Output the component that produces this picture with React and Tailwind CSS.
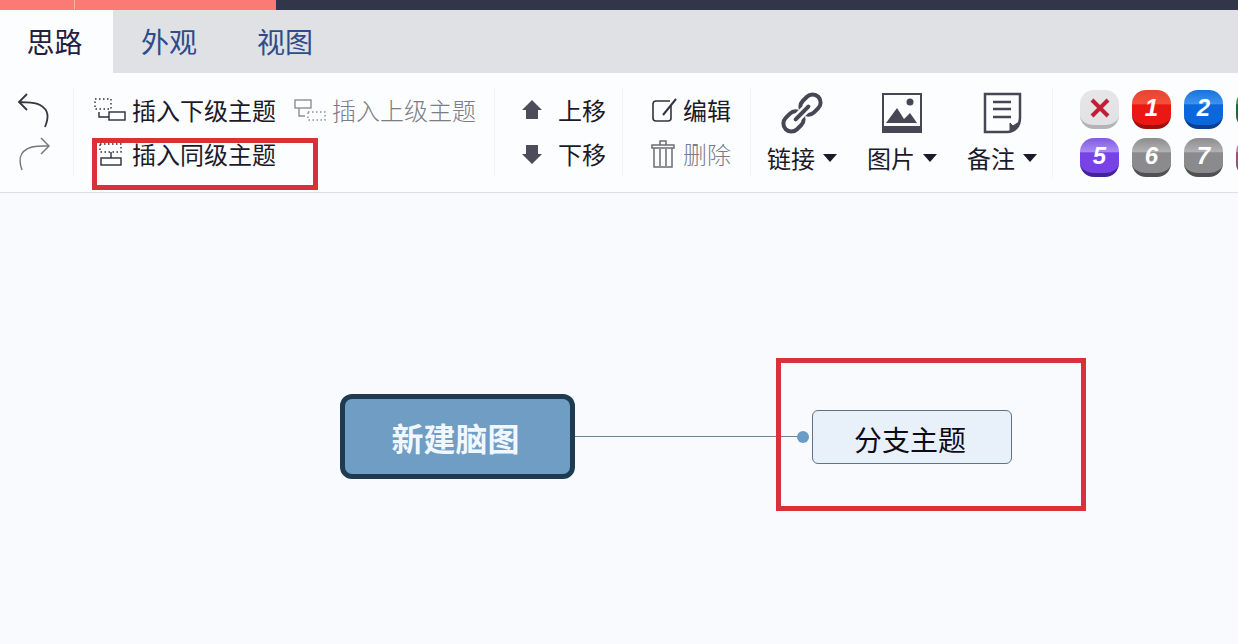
import React, { useState } from "react";

const tabs = ["思路", "外观", "视图"];

const badges = [
  [
    { name: "1", label: "1", style: "from-[#e8432f] via-[#f4503c] to-[#ea1812] border-[#9c100d]" },
    { name: "2", label: "2", style: "from-[#1673dc] via-[#3d93ee] to-[#0a68dc] border-[#0a3f92]" },
    { name: "3", style: "from-[#2f7d3a] via-[#4f9a52] to-[#1f6b2b] border-[#123d18]" },
  ],
  [
    { name: "5", label: "5", style: "from-[#8159e4] via-[#a98cf2] to-[#7743e6] border-[#43239a]" },
    { name: "6", label: "6", style: "from-[#8d8d8f] via-[#b2b2b4] to-[#8b8b8d] border-[#505052]" },
    { name: "7", label: "7", style: "from-[#8d8d8f] via-[#b2b2b4] to-[#8b8b8d] border-[#505052]" },
    { name: "8", style: "from-[#a5648c] via-[#c98ab0] to-[#94527c] border-[#552a45]" },
  ],
];

function UndoIcon() {
  return (
    <svg width="32" height="36" viewBox="0 0 32 36" fill="none" stroke="#35333f" strokeWidth="1.8">
      <path d="M9 2 1 10l8 8" />
      <path d="M1 10c8 1 14-1 21 3 9 5 9 12 5 22" />
    </svg>
  );
}

function RedoIcon() {
  return (
    <svg width="32" height="36" viewBox="0 0 32 36" fill="none" stroke="#77767f" strokeWidth="1.5">
      <path d="M23 2l8 8-8 8" />
      <path d="M31 10c-8 0-16-1-22 3-7 4-9 10-5 21" />
    </svg>
  );
}

function ChildIcon() {
  return (
    <svg width="32" height="24" viewBox="0 0 32 24" fill="none" stroke="#2c2b3a" strokeWidth="1.4">
      <path d="M1 1h16v10H1z" strokeDasharray="1.5 2.5" />
      <path d="M5 14v5h10" />
      <rect x="15" y="14" width="16" height="8" />
    </svg>
  );
}

function ParentIcon() {
  return (
    <svg width="32" height="24" viewBox="0 0 32 24" fill="none" stroke="#8d8c96" strokeWidth="1.4">
      <rect x="1" y="2" width="16" height="8" />
      <path d="M5 10v8h6" />
      <path d="M14 14h17v8H14z" strokeDasharray="1.5 2.5" />
    </svg>
  );
}

function SiblingIcon() {
  return (
    <svg width="32" height="24" viewBox="0 0 32 24" fill="none" stroke="#2c2b3a" strokeWidth="1.4">
      <path d="M6 2h21v8H6z" strokeDasharray="1.5 2.5" />
      <path d="M17 10v6" />
      <rect x="7" y="16" width="20" height="7" />
    </svg>
  );
}

function ArrowIcon({ down }) {
  return (
    <svg width="20" height="20" viewBox="0 0 20 20" fill="#4d4c5b" className={down ? "rotate-180" : ""}>
      <path d="M10 0 20 10h-4v9H4v-9H0z" />
    </svg>
  );
}

function EditIcon() {
  return (
    <svg width="26" height="26" viewBox="0 0 26 26" fill="none" stroke="#35333f" strokeWidth="1.6">
      <path d="M19 4H5Q2 4 2 7v14q0 3 3 3h12q3 0 3-3V9" />
      <path d="M25 2 12 18" strokeWidth="2" />
    </svg>
  );
}

function TrashIcon() {
  return (
    <svg width="26" height="28" viewBox="0 0 26 28" fill="none" stroke="#6c6b76" strokeWidth="1.5">
      <path d="M1 5h22v3H1zM9 5V1h6v4M3 8v19h18V8M9 9v17M15 9v17" />
    </svg>
  );
}

function LinkIcon() {
  return (
    <svg width="42" height="42" viewBox="0 0 42 42" fill="none" stroke="#474654">
      <g transform="rotate(-45 21 21)" strokeWidth="4">
        <rect x="-2" y="13" width="22" height="16" rx="8" />
        <rect x="22" y="13" width="22" height="16" rx="8" />
        <path d="M12 21h18" stroke="#fcfdff" strokeWidth="9" strokeLinecap="round" />
        <path d="M12 21h18" strokeWidth="4" strokeLinecap="round" />
      </g>
    </svg>
  );
}

function PictureIcon() {
  return (
    <svg width="40" height="40" viewBox="0 0 40 40">
      <rect x="1" y="1" width="38" height="38" fill="none" stroke="#474654" strokeWidth="2" />
      <path d="M1 33h38v6H1z" fill="#474654" />
      <path d="M4 30 15 15l7 11 6-6 7 10z" fill="#474654" />
      <circle cx="28" cy="9" r="3.5" fill="#474654" />
    </svg>
  );
}

function NoteIcon() {
  return (
    <svg width="40" height="42" viewBox="0 0 40 42" fill="none" stroke="#474654" strokeWidth="2.5">
      <path d="M3 2h35v24c0 8-5 14-13 14H3z" />
      <path d="M11 10h18M11 17h18M11 25h18" strokeWidth="2.5" />
      <path d="M28 39v-8l3 3 6-4c-1 4-4 7-9 9z" fill="#474654" strokeWidth="1" />
    </svg>
  );
}

function ToolButton({ icon, label, disabled, className = "gap-1.5", children }) {
  return (
    <button
      type="button"
      disabled={disabled}
      className={`relative flex h-11 items-center whitespace-nowrap text-2xl ${className} ${
        disabled ? "font-light text-[#7d7c86]" : "text-[#1c1a29]"
      }`}
    >
      {icon}
      <span>{label}</span>
      {children}
    </button>
  );
}

function MenuButton({ icon, label }) {
  return (
    <button type="button" className="flex flex-col items-center gap-1 text-2xl text-[#1c1a29]">
      <span className="flex h-[42px] items-center">{icon}</span>
      <span className="flex items-center gap-2 whitespace-nowrap leading-10">
        {label}
        <svg width="14" height="8" viewBox="0 0 14 8" fill="#1c1a29">
          <path d="M0 0h14L7 8z" />
        </svg>
      </span>
    </button>
  );
}

function Badge({ name, label, style }) {
  return (
    <button
      type="button"
      aria-label={name}
      className={`flex size-[39px] shrink-0 items-center justify-center rounded-[14px] border-b-4 bg-linear-to-b via-40% to-42% font-['Liberation_Sans',sans-serif] text-2xl font-bold italic text-white ${style}`}
    >
      {label}
    </button>
  );
}

function Toolbar() {
  return (
    <div className="flex h-[120px] items-start overflow-hidden border-b border-[#dcdfe6] bg-[#fcfdff] pt-[15px]">
      <div className="flex w-[74px] shrink-0 flex-col border-r border-[#f3f4f9] pl-[18px]">
        <button type="button" aria-label="撤销" className="flex h-11 items-center">
          <UndoIcon />
        </button>
        <button type="button" aria-label="重做" className="flex h-11 items-center">
          <RedoIcon />
        </button>
      </div>

      <div className="flex w-[421px] shrink-0 gap-[18px] border-r border-[#f3f4f9] pl-5">
        <div className="flex flex-col items-start">
          <ToolButton icon={<ChildIcon />} label="插入下级主题" />
          <ToolButton icon={<SiblingIcon />} label="插入同级主题">
            <span className="pointer-events-none absolute -left-0.5 top-1.5 h-[52px] w-[226px] border-5 border-[#d9303a]" />
          </ToolButton>
        </div>
        <ToolButton icon={<ParentIcon />} label="插入上级主题" disabled />
      </div>

      <div className="w-32 shrink-0 border-r border-[#f3f4f9] pl-[27px]">
        <ToolButton icon={<ArrowIcon />} label="上移" className="gap-4" />
        <ToolButton icon={<ArrowIcon down />} label="下移" className="gap-4" />
      </div>

      <div className="w-32 shrink-0 border-r border-[#f3f4f9] pl-7">
        <ToolButton icon={<EditIcon />} label="编辑" />
        <ToolButton icon={<TrashIcon />} label="删除" disabled />
      </div>

      <div className="flex w-[302px] shrink-0 gap-[30px] border-r border-[#f3f4f9] pl-4 pt-1">
        <MenuButton icon={<LinkIcon />} label="链接" />
        <MenuButton icon={<PictureIcon />} label="图片" />
        <MenuButton icon={<NoteIcon />} label="备注" />
      </div>

      <div className="flex shrink-0 flex-col gap-[9px] pl-[27px] pt-0.5">
        <div className="flex gap-[13px]">
          <button
            type="button"
            aria-label="清除"
            className="flex size-[39px] shrink-0 items-center justify-center rounded-[14px] border-b-4 border-[#b4b3b7] bg-linear-to-b from-[#e6e6e9] to-[#e2e2e5]"
          >
            <svg width="20" height="20" viewBox="0 0 20 20" stroke="#c01f35" strokeWidth="4">
              <path d="M2 2l16 16M18 2 2 18" />
            </svg>
          </button>
          {badges[0].map((badge) => (
            <Badge key={badge.name} {...badge} />
          ))}
        </div>
        <div className="flex gap-[13px]">
          {badges[1].map((badge) => (
            <Badge key={badge.name} {...badge} />
          ))}
        </div>
      </div>
    </div>
  );
}

function Canvas() {
  return (
    <main className="relative flex-1 overflow-hidden bg-[#f9fafe]">
      <div className="absolute left-[575px] top-[243px] h-px w-[228px] bg-[#6b8397]" />
      <div className="absolute left-[340px] top-[201px] flex h-[85px] w-[235px] items-center justify-center rounded-xl border-5 border-[#1f3b52] bg-[#6f9dc3] pr-1 text-[32px] font-bold text-[#f1f7ff]">
        新建脑图
      </div>
      <div className="absolute left-[776px] top-[165px] h-[153px] w-[310px] border-5 border-[#d9303a]" />
      <div className="absolute left-[797px] top-[238px] size-3 rounded-full bg-[#6a9cc5]" />
      <div className="absolute left-[812px] top-[217px] flex h-[54px] w-[200px] items-center justify-center rounded-md border border-[#5f7285] bg-[#e8f0f9] pr-1 pt-1 text-[28px] text-[#0d0b18]">
        分支主题
      </div>
    </main>
  );
}

function App() {
  const [active, setActive] = useState("思路");

  return (
    <div className="flex min-h-screen w-full flex-col overflow-hidden font-['Noto_Sans_CJK_SC',sans-serif]">
      <div className="flex h-2.5 bg-[#31364a]">
        <div className="w-[75px] border-r border-[#ffb0a8] bg-[#fb7a74]" />
        <div className="w-[201px] bg-[#fb7a74]" />
      </div>

      <nav className="flex h-[63px] bg-[#dfe1e4]">
        {tabs.map((tab) => (
          <button
            key={tab}
            type="button"
            onClick={() => setActive(tab)}
            className={`pb-0.5 pr-1 text-[28px] ${
              tab === active ? "w-[113px] bg-[#fcfdff] text-[#25203f]" : "w-[116px] text-[#2d4c8c]"
            }`}
          >
            {tab}
          </button>
        ))}
      </nav>

      <Toolbar />
      <Canvas />
    </div>
  );
}

export default App;
